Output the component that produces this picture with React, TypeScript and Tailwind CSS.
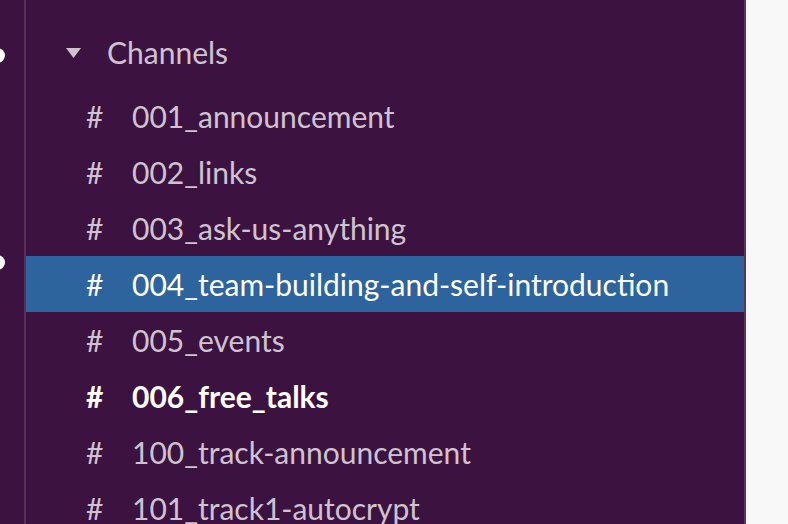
const channels = [
  { name: '001_announcement' },
  { name: '002_links' },
  { name: '003_ask-us-anything' },
  { name: '004_team-building-and-self-introduction', active: true },
  { name: '005_events' },
  { name: '006_free_talks', unread: true },
  { name: '100_track-announcement' },
  { name: '101_track1-autocrypt' },
];

export default function App() {
  return (
    <div className="w-[788px] h-[524px] flex overflow-hidden bg-[#3c1340] font-['Lato','Liberation_Sans',sans-serif]">
      {/* Workspace strip */}
      <div className="relative w-[24px] shrink-0 bg-[#3c1340]">
        <span className="absolute -left-[10px] top-[48px] w-[15px] h-[15px] rounded-full bg-white" />
        <span className="absolute -left-[10px] top-[255px] w-[15px] h-[15px] rounded-full bg-white" />
      </div>
      <div className="w-[2px] shrink-0 bg-[#553057]" />

      {/* Sidebar */}
      <div className="w-[720px] shrink-0 flex flex-col pt-[30px] border-r-2 border-white/15">
        <div className="h-[56px] flex items-center pl-[40px] text-[#cfc3cf]">
          <svg width="15" height="10" viewBox="0 0 15 10" className="mr-[26px]">
            <path d="M0 0 L15 0 L7.5 10 Z" fill="#cfc3cf" />
          </svg>
          <span className="text-[30px]">Channels</span>
        </div>
        <ul className="mt-[13px]">
          {channels.map((c) => (
            <li
              key={c.name}
              className={`h-[56px] flex items-center pl-[60px] text-[30px] whitespace-nowrap ${
                c.active
                  ? 'bg-[#2d649d] text-white'
                  : c.unread
                  ? 'text-white font-bold'
                  : 'text-[#cfc3cf]'
              }`}
            >
              <span className="w-[46px]">#</span>
              <span>{c.name}</span>
            </li>
          ))}
        </ul>
      </div>

      {/* Message pane edge */}
      <div className="flex-1 bg-[#f8f8f8]" />
    </div>
  );
}
